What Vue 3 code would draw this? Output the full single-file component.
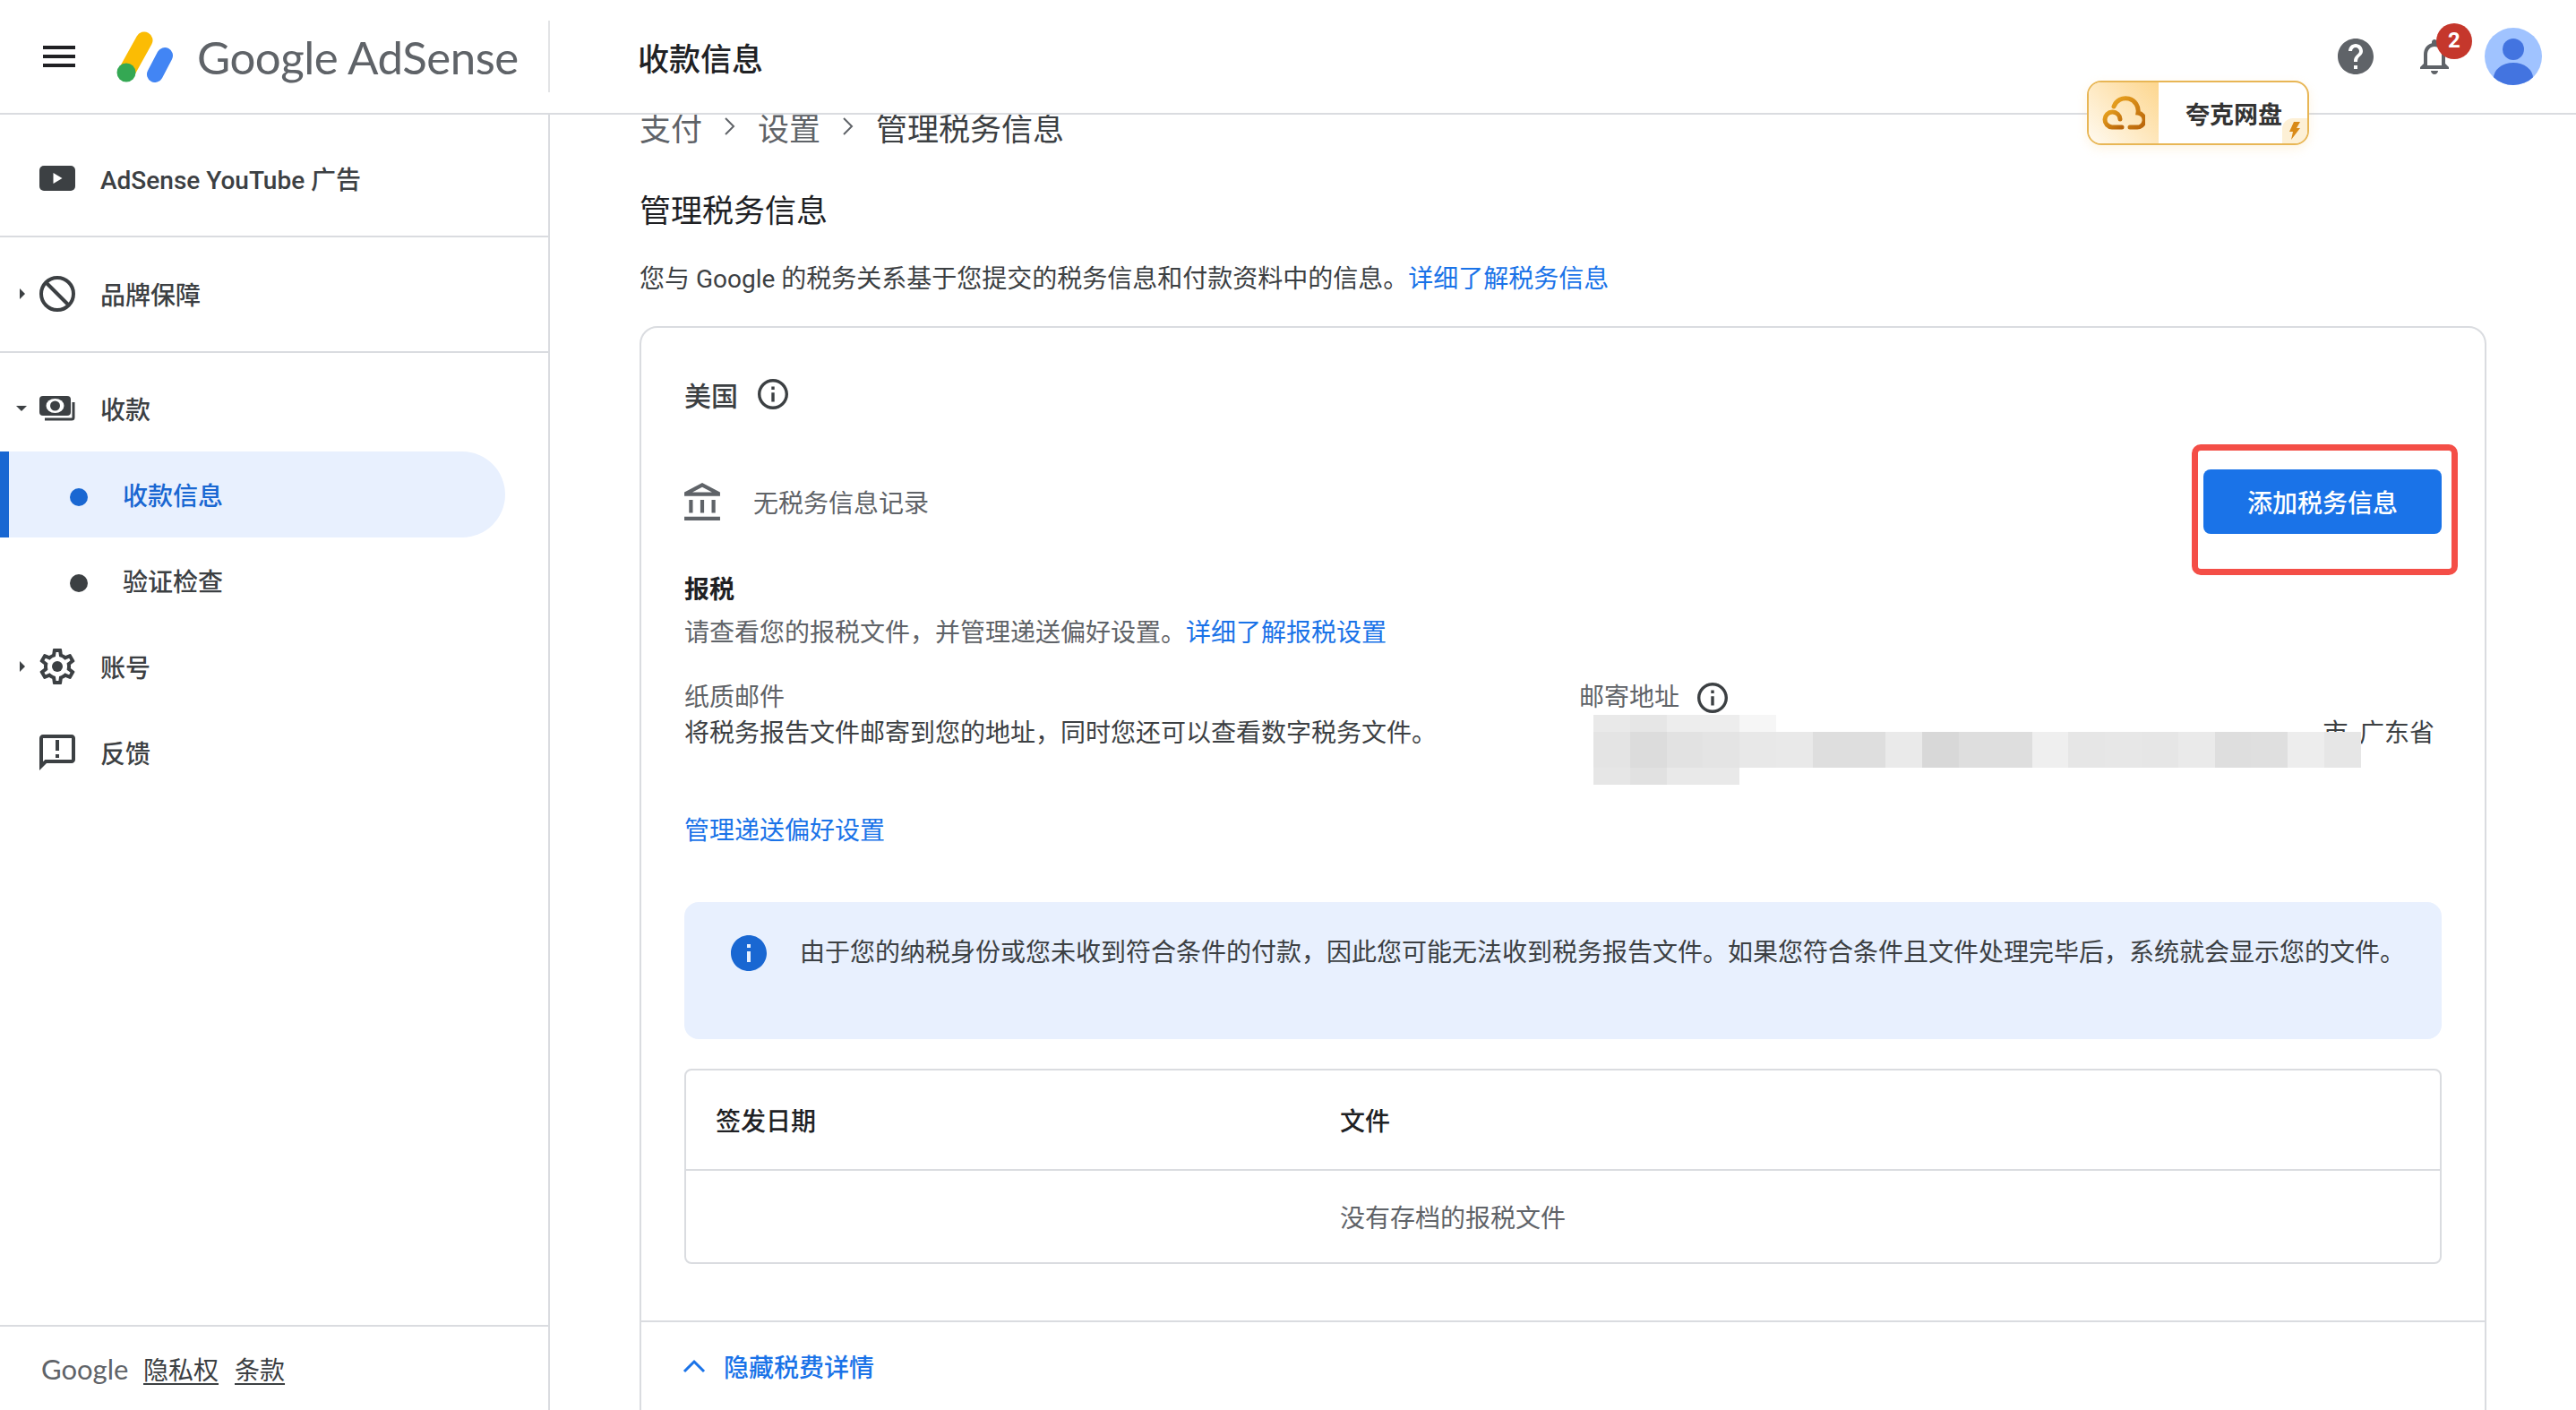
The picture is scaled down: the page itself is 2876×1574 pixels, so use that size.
<script setup>
const redactRows = [
  { cls: 'r-top', cells: ['#e9e9e9', '#e6e6e6', '#ededed', '#ededed', '#f6f6f6'] },
  { cls: 'r-mid', cells: ['#e4e4e4', '#dcdcdc', '#e2e2e2', '#e4e4e4', '#e8e8e8', '#e9e9e9', '#dedede', '#dedede', '#eaeaea', '#d8d8d8', '#dedede', '#dedede', '#efefef', '#e6e6e6', '#e7e7e7', '#e6e6e6', '#eaeaea', '#dedede', '#dfdfdf', '#ededed', '#e6e6e6'] },
  { cls: 'r-bot', cells: ['#e6e6e6', '#e1e1e1', '#e9e9e9', '#e9e9e9'] },
]
</script>

<template>
  <div class="page">
    <header class="topbar">
      <div class="brand">
        <svg class="menu" width="36" height="24" viewBox="0 0 36 24"><path d="M0 0h36v4H0zM0 10h36v4H0zM0 20h36v4H0z" fill="#202124" /></svg>
        <svg class="logo" width="64" height="57" viewBox="0 0 64 57">
          <path d="M31 10 11 46" stroke="#fbbc04" stroke-width="19" stroke-linecap="round" fill="none" />
          <path d="M54 27 43 48" stroke="#4285f4" stroke-width="18" stroke-linecap="round" fill="none" />
          <circle cx="11" cy="46" r="10.5" fill="#34a853" />
        </svg>
        <span class="wordmark">Google AdSense</span>
      </div>
      <h1 class="page-title">收款信息</h1>
      <div class="top-actions">
        <svg class="help" width="40" height="40" viewBox="2 2 20 20"><path fill="#5f6368" d="M12 2C6.48 2 2 6.48 2 12s4.48 10 10 10 10-4.48 10-10S17.52 2 12 2zm1 17h-2v-2h2v2zm2.07-7.75l-.9.92C13.45 12.9 13 13.5 13 15h-2v-.5c0-1.1.45-2.1 1.17-2.83l1.24-1.26c.37-.36.59-.86.59-1.41 0-1.1-.9-2-2-2s-2 .9-2 2H8c0-2.21 1.79-4 4-4s4 1.79 4 4c0 .88-.36 1.68-.93 2.25z" /></svg>
        <div class="bell">
          <svg width="48" height="48" viewBox="0 0 24 24"><path fill="#5f6368" d="M12 22c1.1 0 2-.9 2-2h-4c0 1.1.9 2 2 2zm6-6v-5c0-3.07-1.63-5.64-4.5-6.32V4c0-.83-.67-1.5-1.5-1.5s-1.5.67-1.5 1.5v.68C7.64 5.36 6 7.92 6 11v5l-2 2v1h16v-1l-2-2zm-2 1H8v-6c0-2.48 1.51-4.5 4-4.5s4 2.02 4 4.5v6z" /></svg>
          <span class="badge">2</span>
        </div>
        <svg class="avatar" width="64" height="64" viewBox="0 0 64 64">
          <defs><clipPath id="av"><circle cx="32" cy="32" r="32" /></clipPath></defs>
          <circle cx="32" cy="32" r="32" fill="#a0c3ff" />
          <g clip-path="url(#av)" fill="#4374e0">
            <ellipse cx="32" cy="24" rx="12" ry="12" />
            <ellipse cx="32" cy="56" rx="22" ry="17" />
          </g>
        </svg>
      </div>
    </header>

    <div class="body">
      <aside class="sidebar">
        <section class="side-sec first">
          <div class="nav-row">
            <span class="caret"></span>
            <svg width="40" height="28" viewBox="0 0 40 28">
              <rect width="40" height="28" rx="5" fill="#3c4043" />
              <path d="M15.500 8v12l10-6z" fill="#fff" />
            </svg>
            <span>AdSense YouTube 广告</span>
          </div>
        </section>
        <section class="side-sec second">
          <div class="nav-row">
            <span class="caret right"></span>
            <svg width="40" height="40" viewBox="0 0 40 40" fill="none" stroke="#3c4043" stroke-width="4">
              <circle cx="20" cy="20" r="18" />
              <path d="M7 7l26 26" />
            </svg>
            <span>品牌保障</span>
          </div>
        </section>
        <section class="side-sec third">
          <div class="nav-row">
            <span class="caret down"></span>
            <svg width="40" height="28" viewBox="0 0 40 28">
              <rect x="0" y="0" width="35" height="22" rx="4" fill="#3c4043" />
              <ellipse cx="17.500" cy="11" rx="10" ry="8" fill="#fff" />
              <circle cx="17.500" cy="11" r="5.500" fill="#3c4043" />
              <path d="M38 7v17a2 2 0 0 1-2 2H6" fill="none" stroke="#3c4043" stroke-width="3" />
            </svg>
            <span>收款</span>
          </div>
          <div class="sub-row active"><i class="dot"></i><span>收款信息</span></div>
          <div class="sub-row"><i class="dot"></i><span>验证检查</span></div>
          <div class="nav-row">
            <span class="caret right"></span>
            <svg width="40" height="40" viewBox="2 2 20 20">
              <path fill="#3c4043" d="M19.430 12.980c.04-.32.07-.64.07-.98 0-.34-.03-.66-.07-.98l2.110-1.650c.19-.15.24-.42.12-.64l-2-3.460c-.09-.16-.26-.25-.44-.25-.06 0-.12.01-.17.03l-2.490 1c-.52-.4-1.080-.73-1.690-.98l-.38-2.650C14.460 2.180 14.250 2 14 2h-4c-.25 0-.46.18-.49.42l-.38 2.650c-.61.25-1.170.59-1.690.98l-2.490-1c-.06-.02-.12-.03-.18-.03-.17 0-.34.09-.43.25l-2 3.460c-.13.22-.07.49.12.64l2.110 1.650c-.04.32-.07.65-.07.98 0 .33.03.66.07.98l-2.110 1.650c-.19.15-.24.42-.12.64l2 3.460c.09.16.26.25.44.25.06 0 .12-.01.17-.03l2.490-1c.52.4 1.080.73 1.690.98l.38 2.650c.03.24.24.42.49.42h4c.25 0 .46-.18.49-.42l.38-2.650c.61-.25 1.170-.59 1.690-.98l2.490 1c.06.02.12.03.18.03.17 0 .34-.09.43-.25l2-3.460c.12-.22.07-.49-.12-.64l-2.110-1.650zm-1.980-1.710c.04.31.05.52.05.73 0 .21-.02.43-.05.73l-.14 1.130.89.7 1.080.84-.7 1.210-1.270-.51-1.040-.42-.9.68c-.43.32-.84.56-1.250.73l-1.060.43-.16 1.130-.2 1.350h-1.400l-.19-1.350-.16-1.130-1.060-.43c-.43-.18-.83-.41-1.230-.71l-.91-.7-1.060.43-1.270.51-.7-1.210 1.080-.84.89-.7-.14-1.130c-.03-.31-.05-.54-.05-.74s.02-.43.05-.73l.14-1.130-.89-.7-1.080-.84.7-1.210 1.270.51 1.040.42.9-.68c.43-.32.84-.56 1.250-.73l1.060-.43.16-1.130.2-1.350h1.390l.19 1.350.16 1.130 1.060.43c.43.18.83.41 1.230.71l.91.7 1.060-.43 1.270-.51.7 1.210-1.070.85-.89.7.14 1.130z" />
              <circle cx="12" cy="12" r="3" fill="#3c4043" />
            </svg>
            <span>账号</span>
          </div>
          <div class="nav-row">
            <span class="caret"></span>
            <svg width="40" height="40" viewBox="2 2 20 20"><path fill="#3c4043" d="M20 2H4c-1.100 0-2 .9-2 2v18l4-4h14c1.100 0 2-.9 2-2V4c0-1.100-.9-2-2-2zm0 14H5.170L4 17.170V4h16v12zM11 5h2v6h-2zm0 8h2v2h-2z" /></svg>
            <span>反馈</span>
          </div>
        </section>
        <footer class="side-foot">
          <span class="foot-google">Google</span>
          <a>隐私权</a>
          <a>条款</a>
        </footer>
      </aside>

      <main class="main">
        <nav class="crumbs">
          <span>支付</span>
          <svg width="18" height="24" viewBox="0 0 18 24" fill="none" stroke="#5f6368" stroke-width="2"><path d="M4 3l9 9-9 9" /></svg>
          <span>设置</span>
          <svg width="18" height="24" viewBox="0 0 18 24" fill="none" stroke="#5f6368" stroke-width="2"><path d="M4 3l9 9-9 9" /></svg>
          <span class="current">管理税务信息</span>
        </nav>
        <h2 class="section-title">管理税务信息</h2>
        <p class="intro">您与 Google 的税务关系基于您提交的税务信息和付款资料中的信息。<a class="link">详细了解税务信息</a></p>

        <div class="card">
          <div class="card-body">
            <div class="country">
              <span>美国</span>
              <svg class="info" width="34" height="34" viewBox="2 2 20 20"><path fill="#3c4043" d="M11 7h2v2h-2zm0 4h2v6h-2zm1-9C6.480 2 2 6.480 2 12s4.480 10 10 10 10-4.480 10-10S17.520 2 12 2zm0 18c-4.410 0-8-3.590-8-8s3.590-8 8-8 8 3.590 8 8-3.590 8-8 8z" /></svg>
            </div>

            <div class="tax-row">
              <svg width="40" height="42" viewBox="2 1 19 20"><path fill="#5f6368" d="M6.500 10h-2v7h2v-7zm6 0h-2v7h2v-7zm8.500 9H2v2h19v-2zm-2.500-9h-2v7h2v-7zm-7-6.740L16.710 6H6.290l5.210-2.740m0-2.260L2 6v2h19V6l-9.500-5z" /></svg>
              <span class="no-record">无税务信息记录</span>
              <div class="add-wrap">
                <button class="btn-add">添加税务信息</button>
                <div class="red-box"></div>
              </div>
            </div>

            <h3 class="filing-title">报税</h3>
            <p class="filing-desc">请查看您的报税文件，并管理递送偏好设置。<a class="link">详细了解报税设置</a></p>

            <div class="delivery">
              <div class="paper">
                <div class="label">纸质邮件</div>
                <div class="value">将税务报告文件邮寄到您的地址，同时您还可以查看数字税务文件。</div>
              </div>
              <div class="address">
                <div class="label with-icon">
                  邮寄地址
                  <svg width="34" height="34" viewBox="2 2 20 20"><path fill="#3c4043" d="M11 7h2v2h-2zm0 4h2v6h-2zm1-9C6.480 2 2 6.480 2 12s4.480 10 10 10 10-4.480 10-10S17.520 2 12 2zm0 18c-4.410 0-8-3.590-8-8s3.590-8 8-8 8 3.590 8 8-3.590 8-8 8z" /></svg>
                </div>
                <div class="value right">市, 广东省</div>
                <div class="redact">
                  <div v-for="row in redactRows" :key="row.cls" class="redact-row" :class="row.cls">
                    <i v-for="(c, i) in row.cells" :key="i" :style="{ background: c }"></i>
                  </div>
                </div>
              </div>
            </div>

            <a class="link manage">管理递送偏好设置</a>

            <div class="notice">
              <svg width="40" height="40" viewBox="2 2 20 20"><path fill="#1967d2" d="M12 2C6.480 2 2 6.480 2 12s4.480 10 10 10 10-4.480 10-10S17.520 2 12 2zm1 15h-2v-6h2v6zm0-8h-2V7h2v2z" /></svg>
              <p>由于您的纳税身份或您未收到符合条件的付款，因此您可能无法收到税务报告文件。如果您符合条件且文件处理完毕后，系统就会显示您的文件。</p>
            </div>

            <div class="docs">
              <div class="docs-head">
                <span class="col-date">签发日期</span>
                <span>文件</span>
              </div>
              <div class="docs-empty">
                <span class="col-date"></span>
                <span>没有存档的报税文件</span>
              </div>
            </div>
          </div>

          <div class="card-foot">
            <svg width="26" height="16" viewBox="0 0 26 16" fill="none" stroke="#1a73e8" stroke-width="3"><path d="M2 14 13 3l11 11" /></svg>
            <a class="link">隐藏税费详情</a>
          </div>
        </div>
      </main>
    </div>

    <div class="quark">
      <div class="quark-icon">
        <svg width="48" height="40" viewBox="0 0 48 40" fill="none" stroke="url(#qk)" stroke-width="5" stroke-linecap="round">
          <defs>
            <linearGradient id="qk" x1="0" y1="0" x2="1" y2="1">
              <stop offset="0" stop-color="#e8a21f" />
              <stop offset="1" stop-color="#b9650a" />
            </linearGradient>
          </defs>
          <path d="M31 36h7a8 8 0 0 0 2-16A14 14 0 0 0 13 13" />
          <path d="M22 36H11a8.500 8.500 0 1 1 9-9" />
        </svg>
      </div>
      <span class="quark-name">夸克网盘</span>
      <div class="quark-bolt">
        <svg width="14" height="20" viewBox="0 0 14 20"><path d="M6 0h7L9 7h4L3 20l2-9H1z" fill="#d98a18" /></svg>
      </div>
    </div>
  </div>
</template>

<style>
html, body { margin: 0; overflow: hidden; background: #fff; }
</style>

<style scoped>
.page {
  position: relative;
  width: 2876px;
  height: 1574px;
  overflow: hidden;
  display: flex;
  flex-direction: column;
  background: #fff;
  color: #3c4043;
  font-family: Roboto, "Noto Sans CJK SC", sans-serif;
  font-size: 28px;
}

.topbar {
  flex: none;
  height: 128px;
  box-sizing: border-box;
  border-bottom: 2px solid #dadce0;
  display: flex;
  align-items: center;
  background: #fff;
  position: relative;
  z-index: 2;
}

.brand {
  width: 614px;
  height: 80px;
  box-sizing: border-box;
  border-right: 2px solid #e3e4e6;
  display: flex;
  align-items: center;
  flex: none;
}

.menu { margin-left: 48px; }
.logo { margin-left: 46px; }

.wordmark {
  margin-left: 26px;
  font-family: Lato, sans-serif;
  font-size: 51px;
  color: #5f6368;
  letter-spacing: -0.5px;
}

.page-title {
  margin: 0 0 0 98px;
  font-size: 35px;
  font-weight: 500;
  color: #202124;
}

.top-actions {
  margin-left: auto;
  padding-right: 38px;
  display: flex;
  align-items: center;
}

.bell { position: relative; height: 48px; margin-left: 44px; }

.badge {
  position: absolute;
  left: 26px;
  top: -13px;
  width: 40px;
  height: 40px;
  border-radius: 50%;
  background: #c5372c;
  color: #fff;
  font-size: 24px;
  font-weight: 700;
  text-align: center;
  line-height: 38px;
}

.avatar { margin-left: 32px; }

.body { flex: 1; display: flex; min-height: 0; }

.sidebar {
  width: 614px;
  flex: none;
  box-sizing: border-box;
  border-right: 2px solid #dadce0;
  display: flex;
  flex-direction: column;
}

.side-sec { border-bottom: 2px solid #dadce0; }
.side-sec.first { height: 137px; box-sizing: border-box; padding-top: 23px; }
.side-sec.second { height: 129px; box-sizing: border-box; padding-top: 15px; }
.side-sec.third { border-bottom: none; padding-top: 14px; }

.nav-row {
  height: 96px;
  display: flex;
  align-items: center;
  padding-left: 22px;
  font-weight: 500;
  color: #3c4043;
}

.nav-row svg { flex: none; }
.nav-row > span:last-child { margin-left: 28px; }

.caret { width: 22px; height: 0; flex: none; position: relative; }
.caret.right::before {
  content: '';
  position: absolute;
  left: 0;
  top: -6px;
  border-left: 6px solid #3c4043;
  border-top: 6px solid transparent;
  border-bottom: 6px solid transparent;
}
.caret.down::before {
  content: '';
  position: absolute;
  left: -4px;
  top: -3px;
  border-top: 6px solid #3c4043;
  border-left: 6px solid transparent;
  border-right: 6px solid transparent;
}

.sub-row {
  width: 564px;
  height: 96px;
  box-sizing: border-box;
  padding-left: 68px;
  border-left: 10px solid transparent;
  border-radius: 0 48px 48px 0;
  display: flex;
  align-items: center;
  font-weight: 500;
}

.sub-row .dot {
  width: 20px;
  height: 20px;
  border-radius: 50%;
  background: #3c4043;
  margin-right: 39px;
  margin-top: 6px;
}

.sub-row.active {
  background: #e8f0fe;
  border-left-color: #1967d2;
  color: #1967d2;
}
.sub-row.active .dot { background: #1967d2; }

.side-foot {
  margin-top: auto;
  height: 95px;
  box-sizing: border-box;
  border-top: 2px solid #dadce0;
  display: flex;
  align-items: center;
  padding-left: 46px;
  color: #3c4043;
}

.foot-google {
  font-family: Lato, sans-serif;
  font-size: 31px;
  color: #5f6368;
  margin-right: 21px;
  width: 93px;
}

.side-foot a { text-decoration: underline; margin-right: 18px; text-underline-offset: 4px; }

.main {
  flex: 1;
  min-width: 0;
  overflow: hidden;
  padding: 0 100px;
}

.crumbs {
  margin-top: -7px;
  height: 40px;
  display: flex;
  align-items: center;
  gap: 22px;
  font-size: 35px;
  color: #5f6368;
}

.crumbs .current { color: #3c4043; }

.section-title {
  margin: 56px 0 0;
  font-size: 35px;
  line-height: 40px;
  font-weight: 400;
  color: #202124;
}

.intro {
  margin: 35px 0 0;
  line-height: 40px;
  color: #3c4043;
}

.link { color: #1a73e8; }

.card {
  margin-top: 32px;
  border: 2px solid #dadce0;
  border-radius: 20px;
  height: 1230px;
  box-sizing: border-box;
}

.card-body { padding: 54px 48px 63px; }

.country {
  display: flex;
  align-items: center;
  gap: 22px;
  height: 40px;
  font-size: 30px;
  font-weight: 500;
}

.tax-row {
  margin-top: 64px;
  height: 72px;
  display: flex;
  align-items: center;
  gap: 37px;
  color: #5f6368;
}

.add-wrap { margin-left: auto; position: relative; }

.btn-add {
  display: block;
  width: 266px;
  height: 72px;
  border: none;
  border-radius: 8px;
  background: #1a73e8;
  color: #fff;
  font: inherit;
  font-weight: 500;
  padding: 0;
}

.red-box {
  position: absolute;
  left: -13px;
  top: -28px;
  width: 297px;
  height: 146px;
  box-sizing: border-box;
  border: 7px solid #f44e47;
  border-radius: 10px;
}

.filing-title {
  margin: 43px 0 0;
  font-size: 28px;
  line-height: 40px;
  font-weight: 700;
  color: #202124;
}

.filing-desc {
  margin: 8px 0 0;
  line-height: 40px;
  color: #5f6368;
}

.delivery { margin-top: 32px; display: flex; }

.label { line-height: 40px; color: #5f6368; }
.value { line-height: 40px; color: #3c4043; }
.value.right { text-align: right; padding-right: 8px; }

.paper { width: 999px; flex: none; }
.address { flex: 1; position: relative; }

.with-icon { display: flex; align-items: center; gap: 20px; }

.redact { position: absolute; left: 16px; top: 39px; }
.redact-row { display: flex; }
.redact-row i { display: block; width: 40.800px; height: 100%; flex: none; }
.r-top { height: 19px; }
.r-mid { height: 40px; }
.r-bot { height: 19px; }

.manage { display: block; margin-top: 69px; line-height: 40px; }

.notice {
  margin-top: 59px;
  height: 153px;
  box-sizing: border-box;
  background: #e8f0fe;
  border-radius: 16px;
  padding: 37px 36px 0 52px;
  display: flex;
  gap: 37px;
}
.notice svg { flex: none; }
.notice p { margin: 0; line-height: 41px; color: #3c4043; margin-top: -1px; }

.docs {
  margin-top: 33px;
  border: 2px solid #dadce0;
  border-radius: 8px;
  height: 218px;
  box-sizing: border-box;
}

.docs-head {
  height: 112px;
  box-sizing: border-box;
  border-bottom: 2px solid #dadce0;
  display: flex;
  align-items: center;
  padding-left: 33px;
  font-weight: 500;
  color: #202124;
}

.docs-empty {
  height: 102px;
  display: flex;
  align-items: center;
  padding-left: 33px;
  color: #5f6368;
}

.col-date { width: 697px; flex: none; }

.card-foot {
  border-top: 2px solid #dadce0;
  height: 97px;
  display: flex;
  align-items: center;
  padding-left: 46px;
  gap: 20px;
  font-weight: 500;
}

.quark {
  position: absolute;
  left: 2330px;
  top: 90px;
  width: 248px;
  height: 72px;
  box-sizing: border-box;
  border: 2px solid #e8b655;
  border-radius: 16px;
  background: #fff;
  display: flex;
  align-items: center;
  overflow: hidden;
  z-index: 3;
  box-shadow: 0 4px 12px rgba(250, 200, 110, 0.2);
}

.quark-icon {
  width: 78px;
  height: 100%;
  flex: none;
  display: flex;
  align-items: center;
  justify-content: center;
  background: linear-gradient(45deg, #fffaf0, #fdd68e);
}

.quark-name {
  margin-left: 30px;
  font-size: 27px;
  font-weight: 700;
  color: #333;
  white-space: nowrap;
}

.quark-bolt {
  position: absolute;
  right: 0;
  bottom: 0;
  width: 28px;
  height: 28px;
  background: #fdf0d6;
  border-radius: 12px 0 0 0;
  display: flex;
  align-items: center;
  justify-content: center;
}
</style>
